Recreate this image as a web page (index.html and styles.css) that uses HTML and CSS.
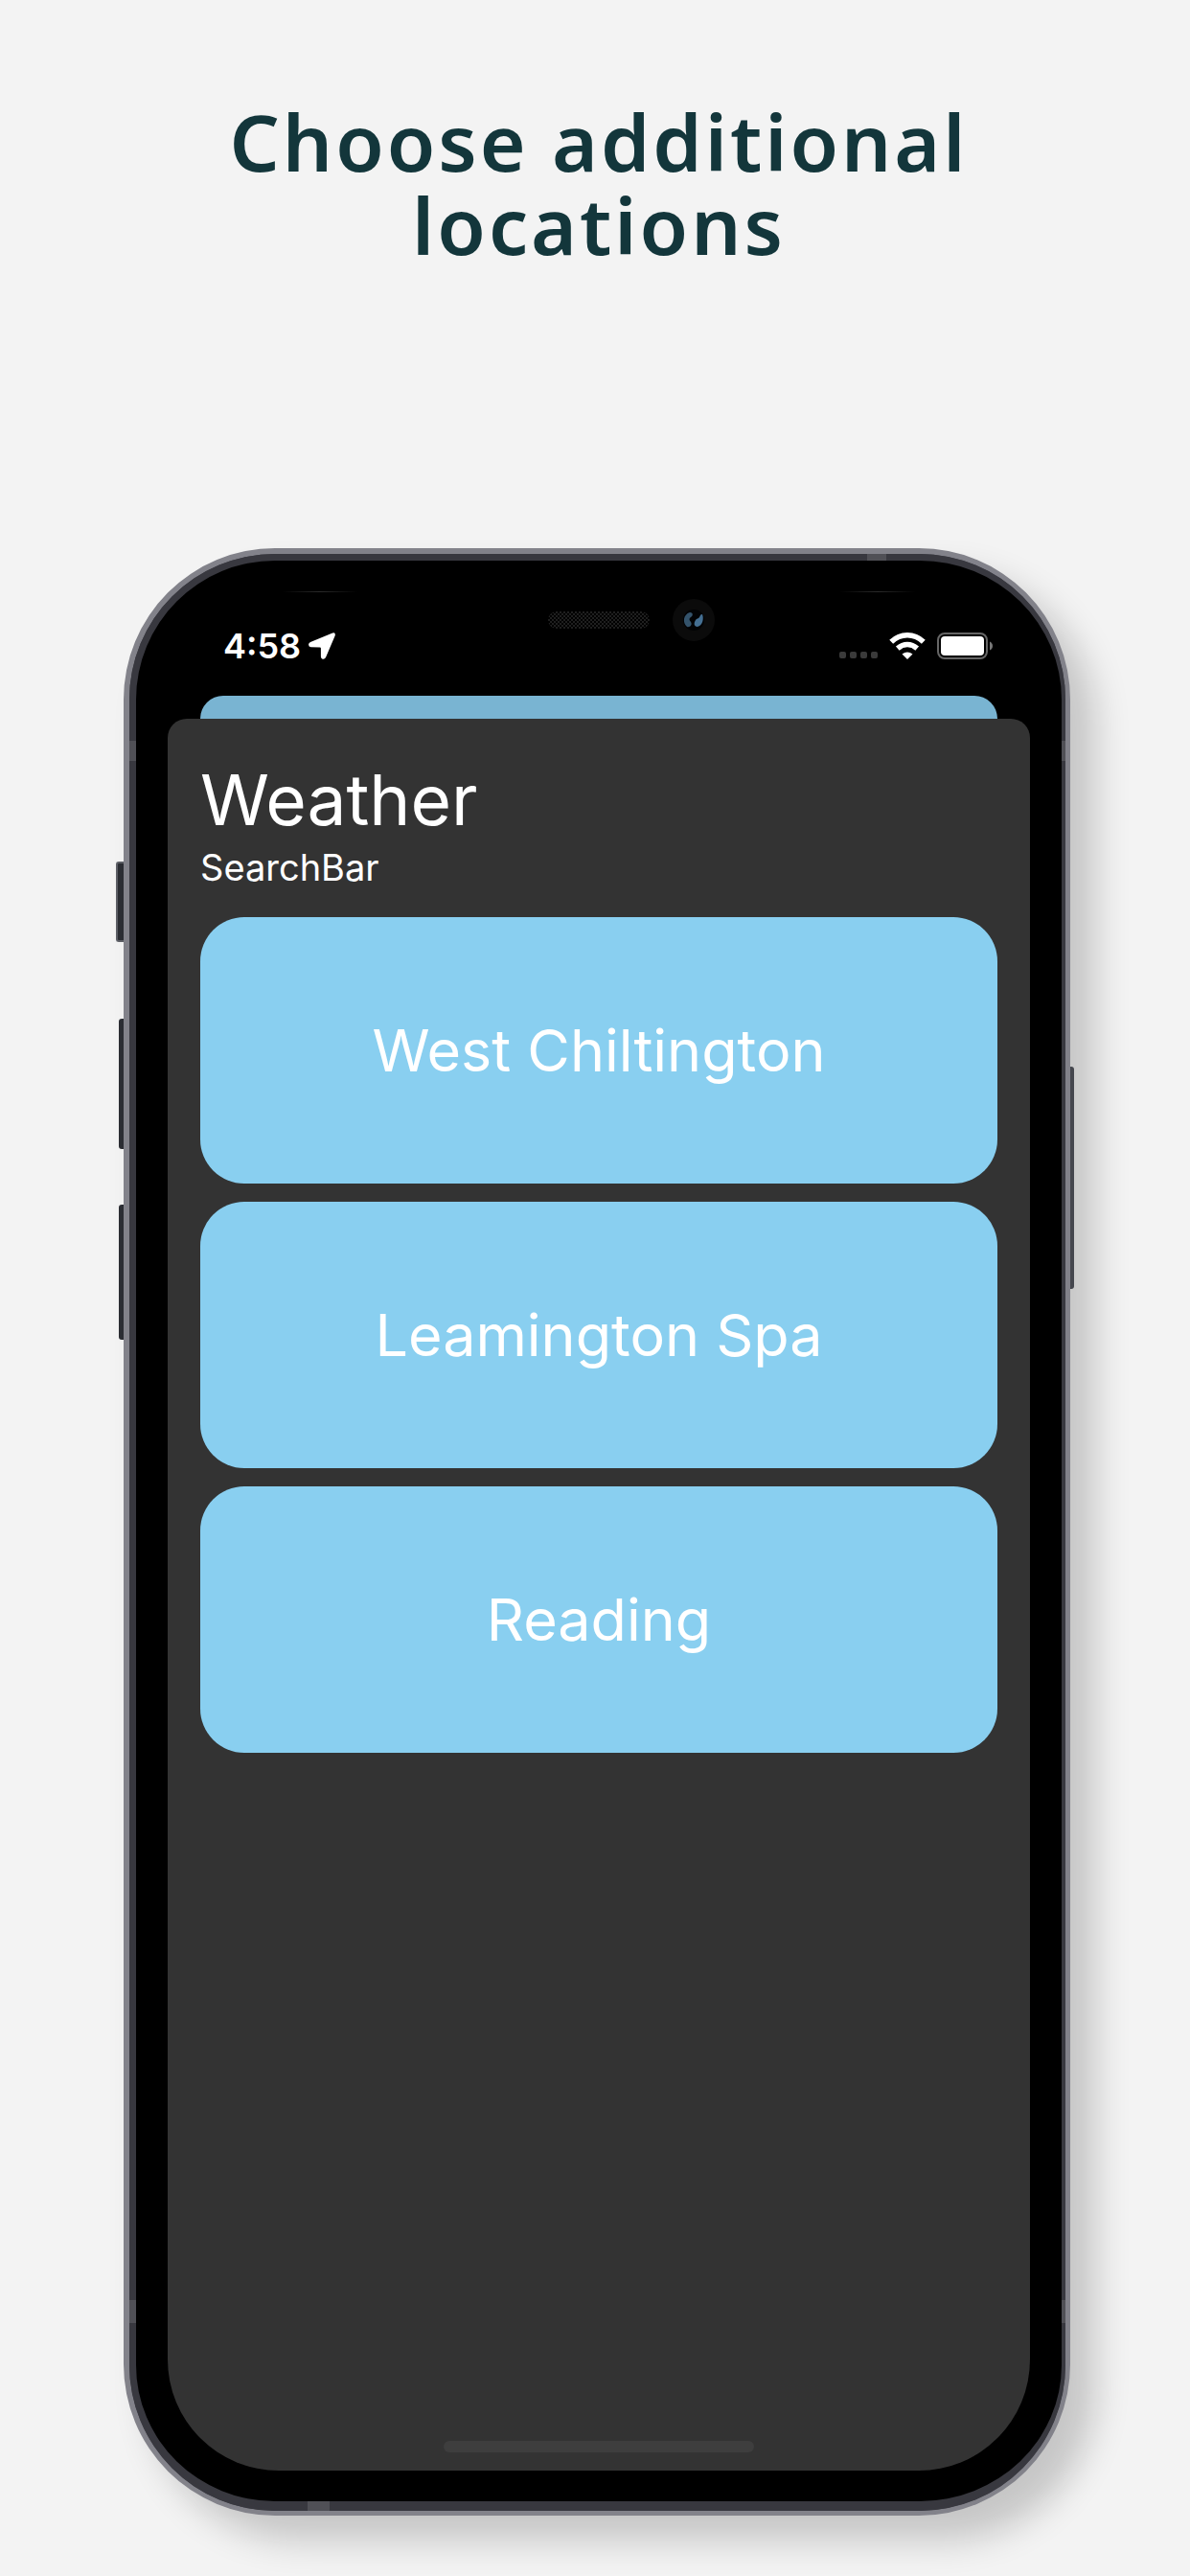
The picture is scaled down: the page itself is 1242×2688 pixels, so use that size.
FILE: index.html
```html
<!DOCTYPE html>
<html lang="en">
<head>
<meta charset="utf-8">
<meta name="viewport" content="width=device-width, initial-scale=1">
<title>Choose additional locations</title>
<link rel="stylesheet" href="styles.css">
</head>
<body>
<main class="page">
  <h1 class="headline">Choose additional<br>locations</h1>

  <div class="phone">
    <span class="side-key side-key-mute"></span>
    <span class="side-key side-key-up"></span>
    <span class="side-key side-key-down"></span>
    <span class="side-key side-key-power"></span>

    <div class="bezel">
      <span class="band band-left band-upper"></span>
      <span class="band band-left band-lower"></span>
      <span class="band band-right band-upper"></span>
      <span class="band band-right band-lower"></span>
      <span class="band band-top"></span>
      <span class="band band-bottom"></span>
      <span class="glint glint-left"></span>
      <span class="glint glint-right"></span>

      <div class="notch">
        <svg class="speaker" viewBox="0 0 106 18" aria-hidden="true">
          <defs>
            <pattern id="mesh" width="4" height="4" patternUnits="userSpaceOnUse">
              <rect width="2" height="2" fill="#1f1f1f"/>
              <rect x="2" y="2" width="2" height="2" fill="#1f1f1f"/>
            </pattern>
          </defs>
          <rect width="106" height="18" rx="9" fill="url(#mesh)"/>
        </svg>
        <svg class="camera" viewBox="0 0 44 44" aria-hidden="true">
          <circle cx="22" cy="22" r="22" fill="#0b0b0b"/>
          <circle cx="22" cy="22" r="11" fill="#020305"/>
          <path d="M18 14c-7 2-8 11-3 15 3 1 6-2 4-5-2-2-2-4 0-5 3-2 2-5-1-5z" fill="#34536b"/>
          <path d="M31 16c2 5 0 12-5 13-4 0-4-4-2-7 1-2 3-1 4-3s1-3 3-3z" fill="#446f92"/>
        </svg>
      </div>

      <div class="status">
        <div class="status-side status-left">
          <span class="time">4:58</span>
          <svg class="arrow" viewBox="0 0 28 28" aria-hidden="true">
            <path d="M24.500.700Q28.500-.6 27.700 3.200L18 26Q16.500 28.400 14.200 27.400Q12.900 26.700 12.900 25.200V16.400Q12.900 15.400 11.900 15.400L2.500 15.200Q-.2 15 .1 12.200Q.3 10.800 2 10Z" fill="#fff"/>
          </svg>
        </div>
        <div class="status-side">
          <svg class="signal" viewBox="0 0 40 28" aria-hidden="true">
            <g fill="#3a3a3a">
              <rect x="0" y="20" width="7" height="7" rx="2"/>
              <rect x="11" y="20" width="7" height="7" rx="2"/>
              <rect x="22" y="20" width="7" height="7" rx="2"/>
              <rect x="33" y="20" width="7" height="7" rx="2"/>
            </g>
          </svg>
          <svg class="wifi" viewBox="0 0 38 28" aria-hidden="true">
            <g fill="none" stroke="#fff" stroke-width="5.600">
              <path d="M2.200 9.800Q9.500 2.800 19 2.800T35.800 9.800"/>
              <path d="M8.800 16.600Q13.500 12.500 19 12.500T29.200 16.600"/>
            </g>
            <path d="M13.500 22.600Q19 18.600 24.500 22.600L19 28Z" fill="#fff"/>
          </svg>
          <svg class="battery" viewBox="0 0 59 28" aria-hidden="true">
            <rect x="1" y="1" width="51" height="26" rx="7" fill="none" stroke="#666" stroke-width="2"/>
            <rect x="4" y="4" width="45" height="20" rx="4" fill="#fff"/>
            <path d="M55 9.500q3 1.500 3 4.500t-3 4.500z" fill="#777"/>
          </svg>
        </div>
      </div>

      <div class="card-behind"></div>

      <section class="sheet">
        <h2 class="sheet-title">Weather</h2>
        <p class="sheet-note">SearchBar</p>
        <div class="places">
          <button class="place" type="button">West Chiltington</button>
          <button class="place" type="button">Leamington Spa</button>
          <button class="place" type="button">Reading</button>
        </div>
        <div class="home-bar"></div>
      </section>
    </div>
  </div>
</main>
</body>
</html>
```

FILE: styles.css
```css
* {
  box-sizing: border-box;
}

body {
  margin: 0;
  background: #f3f3f3;
  font-family: Inter, "Liberation Sans", sans-serif;
  color: #fff;
}

.page {
  display: flex;
  flex-direction: column;
  min-height: 100vh;
  padding: 104px 125px 63px 129px;
}

.headline {
  margin: 0 0 294px;
  padding-left: 4px;
  font: 600 82px/87px "Noto Sans", sans-serif;
  letter-spacing: 3px;
  text-align: center;
  color: #13363b;
}

/* Phone body */

.phone {
  position: relative;
  flex: 1;
  display: flex;
  flex-direction: column;
  border: solid #82828a;
  border-width: 6px 5px 5px 6px;
  border-radius: 158px;
  background: #38383f;
  box-shadow: 26px 26px 36px rgba(0, 0, 0, 0.19);
}

.bezel {
  position: relative;
  flex: 1;
  display: flex;
  flex-direction: column;
  padding: 0 33px 32px;
  border: solid #38383f;
  border-width: 7px 4px 10px 7px;
  border-radius: 152px;
  background: #000;
}

.side-key {
  position: absolute;
  left: -11px;
  width: 5px;
  background: #2b2d33;
  border-radius: 3px 0 0 3px;
}

.side-key-mute {
  top: 321px;
  left: -14px;
  width: 8px;
  height: 84px;
  border: solid #5c5e65;
  border-width: 2px 0 2px 2px;
}

.side-key-up {
  top: 485px;
  height: 136px;
}

.side-key-down {
  top: 679px;
  height: 141px;
}

.side-key-power {
  top: 535px;
  left: auto;
  right: -9px;
  width: 4px;
  height: 232px;
  background: #45474e;
  border-radius: 0 3px 3px 0;
}

.band {
  position: absolute;
  background: #505056;
}

.band-left {
  left: -7px;
  width: 7px;
}

.band-right {
  right: -4px;
  width: 4px;
}

.band-upper {
  top: 188px;
  height: 21px;
}

.band-lower {
  bottom: 186px;
  height: 24px;
}

.band-top {
  top: -7px;
  right: 183px;
  width: 20px;
  height: 7px;
}

.band-bottom {
  bottom: -10px;
  left: 179px;
  width: 23px;
  height: 10px;
}

.glint {
  position: absolute;
  top: 32px;
  width: 78px;
  height: 1px;
  background: linear-gradient(90deg, #000, #2b2b2b, #000);
}

.glint-left {
  left: 153px;
}

.glint-right {
  right: 153px;
}

.notch {
  position: absolute;
  top: 40px;
  left: calc(50% - 53px);
  display: flex;
  align-items: center;
  gap: 24px;
}

.speaker {
  width: 106px;
  height: 18px;
}

.camera {
  width: 44px;
  height: 44px;
}

/* Status bar */

.status {
  display: flex;
  justify-content: space-between;
  height: 141px;
  padding: 67px 38px 0 58px;
}

.status-side {
  display: flex;
  align-items: center;
  gap: 12px;
  height: 44px;
}

.status-left {
  gap: 8px;
}

.time {
  font-size: 36px;
  font-weight: 600;
  line-height: 44px;
}

.arrow {
  width: 28px;
  height: 28px;
}

.signal {
  width: 40px;
  height: 28px;
}

.wifi {
  width: 38px;
  height: 28px;
}

.battery {
  width: 59px;
  height: 28px;
}

/* Location sheet */

.card-behind {
  height: 24px;
  margin: 0 34px;
  border-radius: 24px 24px 0 0;
  background: #79b4d2;
}

.sheet {
  flex: 1;
  display: flex;
  flex-direction: column;
  padding: 38px 34px 19px;
  border-radius: 20px 20px 116px 116px;
  background: #333;
}

.sheet-title {
  margin: 0;
  font-size: 73px;
  font-weight: 400;
  line-height: 94px;
}

.sheet-note {
  margin: 0 0 28px;
  font-size: 38px;
  line-height: 47px;
}

.places {
  display: flex;
  flex-direction: column;
  gap: 19px;
}

.place {
  height: 278px;
  padding: 0;
  border: 0;
  border-radius: 46px;
  background: #89cff0;
  color: #fff;
  font: 400 61px/76px Inter, "Liberation Sans", sans-serif;
}

.home-bar {
  width: 324px;
  height: 12px;
  margin: auto auto 0;
  border-radius: 6px;
  background: #3e3e3e;
}
```
